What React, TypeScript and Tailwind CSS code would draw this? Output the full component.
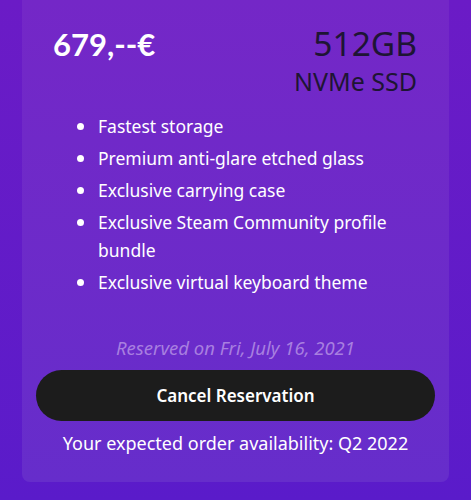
const features = [
    "Fastest storage",
    "Premium anti-glare etched glass",
    "Exclusive carrying case",
    "Exclusive Steam Community profile bundle",
    "Exclusive virtual keyboard theme",
];

const App = () => {
    return (
        <div className="w-[471px] h-[500px] overflow-hidden bg-gradient-to-b from-[#6b1bc6] to-[#5a1bca] px-[22px] font-['Noto_Sans',sans-serif]">
            <div className="h-[482px] rounded-b-lg bg-gradient-to-b from-[#7427c7] to-[#662dcb] flex flex-col">
                {/* Price + storage */}
                <div className="flex justify-between items-start pl-[31px] pr-[32px] pt-[20px]">
                    <div className="mt-[4px] text-white font-['Lato',sans-serif] font-bold text-[31px] leading-[40px]">
                        679,--€
                    </div>
                    <div className="flex flex-col items-end text-[#1e1534]">
                        <span className="mt-[1px] text-[33.5px] leading-[45px]">512GB</span>
                        <span className="text-[25px] leading-[30px]">NVMe SSD</span>
                    </div>
                </div>

                {/* Features */}
                <ul className="mt-[16px] pl-[55px] pr-[40px] flex flex-col gap-[4px]">
                    {features.map((f, i) => (
                        <li key={i} className="flex items-start text-white text-[17.5px] leading-[28px]">
                            <span className="mt-[11px] w-[7px] h-[7px] rounded-full bg-white shrink-0" />
                            <span className="ml-[14px]">{f}</span>
                        </li>
                    ))}
                </ul>

                <div className="mt-auto flex flex-col items-center pb-[27px] px-[14px]">
                    <p className="italic text-[#a87fe0] text-[18.5px] leading-[26px]">
                        Reserved on Fri, July 16, 2021
                    </p>
                    <button className="mt-[9px] w-full h-[51px] rounded-full bg-[#1c1c1c] text-white font-semibold text-[17px]">
                        Cancel Reservation
                    </button>
                    <p className="mt-[10px] text-white text-[18px] leading-[24px]">
                        Your expected order availability: Q2 2022
                    </p>
                </div>
            </div>
        </div>
    );
};

export default App;
